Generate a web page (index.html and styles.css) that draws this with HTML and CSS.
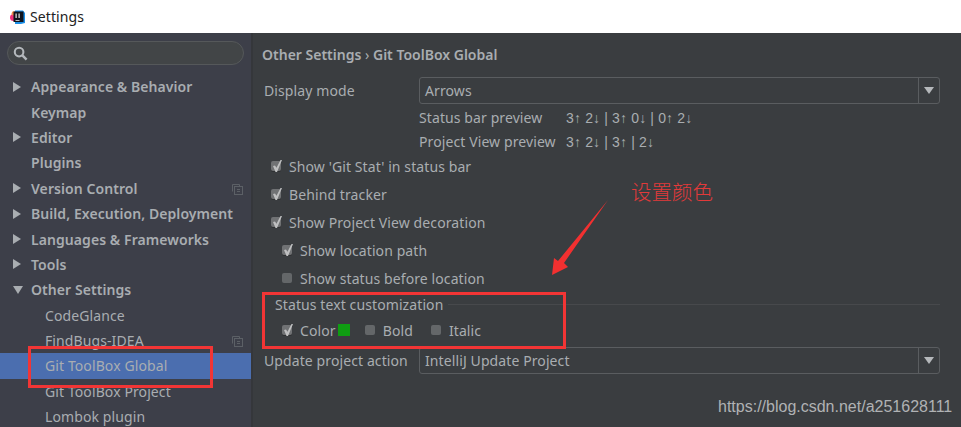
FILE: index.html
```html
<!DOCTYPE html>
<html lang="en">
<head>
    <meta charset="UTF-8">
    <title>Settings</title>
    <link rel="stylesheet" href="styles.css">
</head>
<body>
<div class="window">
    <div class="titlebar">
        <svg class="app-icon" viewBox="0 0 15 14">
            <circle cx="3.6" cy="7.5" r="3.6" fill="#f0307a"/>
            <circle cx="3.8" cy="3.4" r="2.2" fill="#f08a4b"/>
            <path d="M5 0.5 H13 L15 3 V13 L11 14 H5 Z" fill="#1b8fe8"/>
            <rect x="3.5" y="1.5" width="10" height="10.5" fill="#10131c"/>
            <rect x="5.5" y="3.5" width="1.2" height="4.5" fill="#e8e8e8"/>
            <rect x="8.5" y="3.5" width="1.2" height="4.5" fill="#e8e8e8"/>
            <rect x="5.5" y="10" width="4" height="0.8" fill="#e8e8e8"/>
        </svg>
        <span class="title">Settings</span>
    </div>
    <div class="content">
        <aside class="sidebar">
            <div class="search">
                <svg class="search-icon" viewBox="0 0 16 16">
                    <circle cx="6.5" cy="6.5" r="4.6" fill="none" stroke="#b4b8bc" stroke-width="2.2"/>
                    <path d="M10 10 L14.5 14.5" stroke="#b4b8bc" stroke-width="2.6"/>
                </svg>
            </div>
            <ul class="tree">
                <li class="node bold"><span class="arrow right"></span>Appearance &amp; Behavior</li>
                <li class="node bold"><span class="arrow"></span>Keymap</li>
                <li class="node bold"><span class="arrow right"></span>Editor</li>
                <li class="node bold"><span class="arrow"></span>Plugins</li>
                <li class="node bold"><span class="arrow right"></span>Version Control
                    <svg class="copy-icon" viewBox="0 0 11 11">
                        <path d="M0.5 7.5 V0.5 H7.5 V2.5" fill="none" stroke="#5c6066"/>
                        <rect x="2.5" y="2.5" width="8" height="8" fill="none" stroke="#5c6066"/>
                        <path d="M5 5.5 H8 M5 7.5 H8" stroke="#5c6066"/>
                    </svg>
                </li>
                <li class="node bold"><span class="arrow right"></span>Build, Execution, Deployment</li>
                <li class="node bold"><span class="arrow right"></span>Languages &amp; Frameworks</li>
                <li class="node bold"><span class="arrow right"></span>Tools</li>
                <li class="node bold"><span class="arrow down"></span>Other Settings</li>
                <li class="node child">CodeGlance</li>
                <li class="node child">FindBugs-IDEA
                    <svg class="copy-icon" viewBox="0 0 11 11">
                        <path d="M0.5 7.5 V0.5 H7.5 V2.5" fill="none" stroke="#5c6066"/>
                        <rect x="2.5" y="2.5" width="8" height="8" fill="none" stroke="#5c6066"/>
                        <path d="M5 5.5 H8 M5 7.5 H8" stroke="#5c6066"/>
                    </svg>
                </li>
                <li class="node child selected">Git ToolBox Global</li>
                <li class="node child">Git ToolBox Project</li>
                <li class="node child">Lombok plugin</li>
            </ul>
        </aside>
        <main class="panel">
            <div class="crumbs">Other Settings <span class="sep">›</span> Git ToolBox Global</div>
            <div class="form-row">
                <label class="form-label">Display mode</label>
                <div class="combo"><span class="combo-text">Arrows</span><span class="combo-btn"><span class="combo-arrow"></span></span></div>
            </div>
            <div class="preview">
                <div class="preview-row"><span class="preview-label">Status bar preview</span><span class="preview-value">3↑ 2↓ | 3↑ 0↓ | 0↑ 2↓</span></div>
                <div class="preview-row"><span class="preview-label">Project View preview</span><span class="preview-value">3↑ 2↓ | 3↑ | 2↓</span></div>
            </div>
            <div class="checks">
                <div class="check on">Show 'Git Stat' in status bar</div>
                <div class="check on">Behind tracker</div>
                <div class="check on">Show Project View decoration</div>
                <div class="check on nested">Show location path</div>
                <div class="check nested">Show status before location</div>
            </div>
            <div class="group-title"><span>Status text customization</span></div>
            <div class="style-row">
                <div class="check on">Color<span class="swatch"></span></div>
                <div class="check">Bold</div>
                <div class="check">Italic</div>
            </div>
            <div class="form-row update-row">
                <label class="form-label">Update project action</label>
                <div class="combo"><span class="combo-text">IntelliJ Update Project</span><span class="combo-btn"><span class="combo-arrow"></span></span></div>
            </div>
        </main>
    </div>

    <!-- annotations drawn over the screenshot -->
    <div class="mark mark-tree"></div>
    <div class="mark mark-group"></div>
    <svg class="pointer" viewBox="0 0 961 427">
        <polygon points="608,200 564,263 568,267 552,275 554,258 558,261" fill="#f23030"/>
    </svg>
    <div class="note">设置颜色</div>
    <div class="watermark">https://blog.csdn.net/a251628111</div>
</div>
</body>
</html>
```

FILE: styles.css
```css
* {
    box-sizing: border-box;
}
html, body {
    margin: 0;
    padding: 0;
}
body {
    font-family: "Noto Sans", "Open Sans", sans-serif;
    font-size: 14px;
    letter-spacing: 0.1px;
    color: #a9adb1;
    background: #3a3d40;
}
.window {
    position: relative;
    width: 961px;
    height: 427px;
    overflow: hidden;
}
.titlebar {
    height: 33px;
    background: #fff;
    display: flex;
    align-items: center;
    padding-left: 10px;
    gap: 5px;
}
.app-icon {
    width: 15px;
    height: 14px;
}
.title {
    color: #222;
    font-size: 14px;
}
.content {
    display: flex;
    height: 394px;
}
.sidebar {
    width: 253px;
    background: #3d3f49;
    border-right: 2px solid #35373b;
    flex: none;
    padding-top: 8px;
}
.search {
    margin: 0 7px;
    height: 24px;
    border: 1px solid #55585a;
    border-radius: 12px;
    background: #424547;
    display: flex;
    align-items: center;
    padding-left: 5px;
}
.search-icon {
    width: 15px;
    height: 15px;
}
.tree {
    list-style: none;
    margin: 9px 0 0;
    padding: 0;
}
.node {
    position: relative;
    height: 25.4px;
    line-height: 25px;
    display: flex;
    align-items: center;
    white-space: nowrap;
}
.bold {
    font-weight: 600;
    letter-spacing: 0.07px;
    padding-left: 13px;
}
.child {
    padding-left: 45px;
}
.selected {
    background: #4b6eaf;
}
.arrow {
    width: 18px;
    flex: none;
    display: block;
    height: 10px;
}
.arrow.right {
    width: 0;
    height: 0;
    margin-right: 10px;
    border-left: 8px solid #a9adb1;
    border-top: 5px solid transparent;
    border-bottom: 5px solid transparent;
}
.arrow.down {
    width: 0;
    height: 0;
    margin-right: 8px;
    border-top: 8px solid #a9adb1;
    border-left: 5px solid transparent;
    border-right: 5px solid transparent;
}
.copy-icon {
    width: 11px;
    height: 11px;
    position: absolute;
    left: 232px;
    top: 8px;
}
.panel {
    flex: 1;
    padding: 12px 21px 0 9px;
}
.crumbs {
    font-weight: 600;
    letter-spacing: 0;
    height: 20px;
    line-height: 20px;
}
.sep {
    font-weight: 400;
}
.form-row {
    display: flex;
    align-items: center;
    height: 27px;
    margin-top: 12px;
    margin-left: 2px;
}
.form-label {
    width: 155px;
    flex: none;
}
.combo {
    flex: 1;
    height: 27px;
    border: 1px solid #5a5d60;
    border-radius: 3px;
    display: flex;
    align-items: center;
    padding-left: 5px;
}
.combo-text {
    flex: 1;
}
.combo-btn {
    width: 21px;
    height: 100%;
    border-left: 1px solid #5a5d60;
    display: flex;
    align-items: center;
    justify-content: center;
}
.combo-arrow {
    width: 0;
    height: 0;
    border-top: 7px solid #b5b8bb;
    border-left: 5px solid transparent;
    border-right: 5px solid transparent;
}
.preview {
    margin-left: 157px;
    margin-top: 2px;
}
.preview-row {
    display: flex;
    height: 24px;
    line-height: 24px;
    white-space: nowrap;
}
.preview-label {
    width: 147px;
    flex: none;
}
.preview-value {
    font-family: "Liberation Sans", sans-serif;
    letter-spacing: 0.15px;
}
.checks {
    margin-top: -2px;
    padding-left: 9px;
}
.check {
    position: relative;
    display: flex;
    align-items: center;
    height: 28px;
    white-space: nowrap;
}
.check::before {
    content: "";
    width: 10px;
    height: 10px;
    margin-right: 8px;
    border-radius: 2px;
    background: #646769;
    flex: none;
}
.check.on::before {
    background: #707274;
    box-shadow: 0 1px 0 #2e3032;
}
.check.on::after {
    content: "";
    position: absolute;
    left: 1px;
    top: 50%;
    width: 10px;
    height: 12px;
    margin-top: -6px;
    background: #bebfc0;
    clip-path: polygon(10% 50%, 30% 45%, 45% 65%, 85% 0, 100% 0, 50% 100%, 35% 100%);
}
.nested {
    margin-left: 11px;
}
.group-title {
    display: flex;
    align-items: center;
    gap: 5px;
    height: 25px;
    margin-left: 13px;
}
.group-title::after {
    content: "";
    flex: 1;
    height: 1px;
    background: #47494c;
}
.style-row {
    display: flex;
    align-items: center;
    gap: 15px;
    height: 26px;
    padding-left: 20px;
}
.swatch {
    width: 12px;
    height: 12px;
    background: #0f9d12;
    margin-left: 2px;
}
.style-row .check:last-child {
    margin-left: 3px;
}
.update-row {
    margin-top: 4px;
}

/* red marks on top of the picture */
.mark {
    position: absolute;
    border: 3px solid #f23535;
}
.mark-tree {
    left: 28px;
    top: 346px;
    width: 185px;
    height: 42px;
}
.mark-group {
    left: 262px;
    top: 292px;
    width: 304px;
    height: 57px;
}
.pointer {
    position: absolute;
    left: 0;
    top: 0;
    width: 961px;
    height: 427px;
}
.note {
    position: absolute;
    left: 631px;
    top: 176px;
    color: #e23a3a;
    font-family: "Noto Sans CJK SC", sans-serif;
    font-size: 20.5px;
    font-weight: 300;
    line-height: 30px;
    letter-spacing: 0;
}
.watermark {
    position: absolute;
    left: 718px;
    top: 398px;
    color: #b0b2b4;
    font-family: "Liberation Sans", sans-serif;
    font-size: 16px;
    line-height: 18px;
    letter-spacing: 0;
}
```
